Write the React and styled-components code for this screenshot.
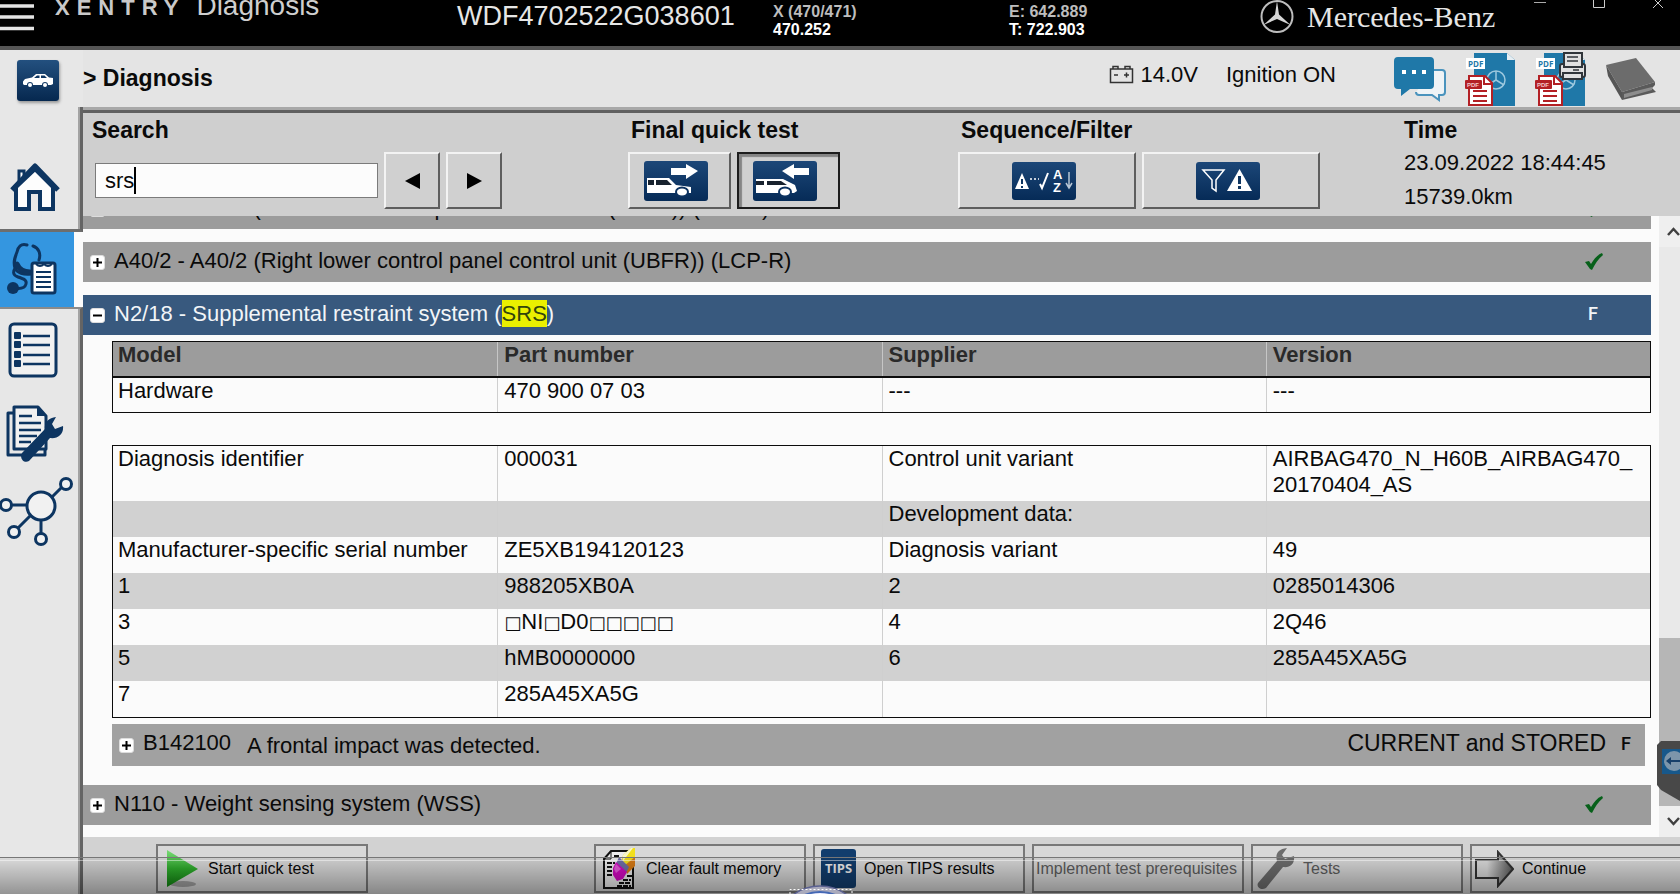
import React, { useState } from "react";
import styled, { createGlobalStyle, css } from "styled-components";

const GlobalStyle = createGlobalStyle`
  * {
    box-sizing: border-box;
  }
  body {
    margin: 0;
    font-family: "Liberation Sans", Arial, sans-serif;
    font-size: 22px;
    color: #0a0a0a;
    background: #e5e5e5;
  }
  button, input {
    font-family: inherit;
    color: inherit;
  }
  button {
    padding: 0;
    cursor: pointer;
  }
  svg {
    display: block;
    flex: none;
  }
`;

const Page = styled.div`
  position: relative;
  display: flex;
  flex-direction: column;
  height: 100vh;
  overflow: hidden;
`;

// Top bar
const TopBar = styled.header`
  display: grid;
  grid-template-columns: 457fr 316fr 236fr 251fr 420fr;
  height: 50px;
  background: #000;
  border-bottom: 4px solid #555;
  color: #e6e6e6;
  overflow: hidden;
  white-space: nowrap;
`;

const Brand = styled.div`
  display: flex;
  align-items: flex-start;
`;

const MenuButton = styled.button`
  width: 55px;
  border: 0;
  background: none;
`;

const BrandName = styled.span`
  font-size: 22px;
  font-weight: bold;
  line-height: 16px;
  letter-spacing: 7px;
  color: #c9c9c9;
  margin-right: 11px;
`;

const BrandProduct = styled.span`
  font-size: 28px;
  line-height: 12px;
  color: #cfcfcf;
`;

const Vin = styled.div`
  font-size: 27px;
  line-height: 32px;
`;

const VehicleInfo = styled.div`
  font-size: 16px;
  font-weight: bold;
  line-height: 18px;
  padding-top: 3px;
  color: #fff;

  div:first-child {
    color: #bdbdbd;
  }
`;

const Maker = styled.div`
  display: flex;
  align-items: flex-start;
  gap: 13px;
  font-family: "Liberation Serif", "Times New Roman", serif;
  font-size: 30px;
  line-height: 34px;
`;

const WindowButtons = styled.div`
  display: flex;
  gap: 47px;
  margin-left: auto;
  padding-right: 16px;
`;

const WindowButton = styled.button`
  width: 12px;
  height: 10px;
  border: 0;
  background: none;
`;

// Frame
const Body = styled.div`
  display: flex;
  flex: 1;
  min-height: 0;
`;

const Sidebar = styled.nav`
  display: flex;
  flex-direction: column;
  flex: none;
  width: 83px;
  background: #e7e7e7;
`;

const CarCell = styled.div`
  height: 57px;
  padding: 10px 0 0 17px;
`;

const CarButton = styled.button`
  display: flex;
  align-items: center;
  justify-content: center;
  width: 42px;
  height: 41px;
  border: 0;
  border-radius: 3px;
  background: linear-gradient(#23507f, #06284f);
  box-shadow: 1px 2px 3px #999;
`;

const edge = css`
  border-right: 3px solid #646464;
  box-shadow: inset -2px 0 0 #a3a3a3;
`;

const HomeCell = styled.div`
  height: 125px;
  padding: 55px 0 0 9px;
  ${edge}
  border-bottom: 3px solid #6e6e6e;
`;

const ActiveCell = styled.div`
  height: 75px;
  background: linear-gradient(to right, #3496e0 74px, #fbfbfb 74px);
  padding: 10px 0 0 6px;
`;

const SideRest = styled.div`
  flex: 1;
  display: flex;
  flex-direction: column;
  align-items: flex-start;
  border-top: 2px solid #8b8b8b;
  ${edge}
`;

const SideButton = styled.button`
  display: block;
  border: 0;
  background: none;
  margin: ${({ $margin }) => $margin || "0"};
`;

const Main = styled.main`
  display: flex;
  flex-direction: column;
  flex: 1;
  min-width: 0;
`;

// Status strip
const Strip = styled.div`
  display: flex;
  align-items: center;
  height: 57px;
  background: #e4e4e4;
`;

const Crumb = styled.h1`
  flex: 1;
  margin: 0;
  font-size: 23px;
  line-height: 26px;
  padding-bottom: 2px;
`;

const Status = styled.div`
  display: flex;
  align-items: center;
  gap: 6px;
  line-height: 26px;
  padding-bottom: 8px;
  margin-right: 28px;
`;

const Tools = styled.div`
  display: flex;
  align-items: center;
  gap: 19px;
  margin-left: 30px;
  margin-right: 23px;
`;

const ToolButton = styled.button`
  border: 0;
  background: none;
`;

// Search and filter panel
const Panel = styled.section`
  display: grid;
  grid-template-columns: 545fr 330fr 446fr 276fr;
  height: 109px;
  border-top: 3px solid #a8a8a8;
  box-shadow: inset 0 3px 0 #606060;
  background: #cfcfcf;
`;

const PanelGroup = styled.div`
  padding-top: 6px;
`;

const PanelTitle = styled.h2`
  margin: 0;
  padding-left: ${({ $indent }) => $indent}px;
  font-size: 23px;
  line-height: 28px;
`;

const PanelLines = styled.div`
  margin-top: 2px;
  line-height: 34px;
`;

const ButtonRow = styled.div`
  display: flex;
  gap: 6px;
  margin-top: 8px;
`;

const SearchRow = styled(ButtonRow)`
  padding-left: 12px;
  align-items: center;
`;

const SearchField = styled.label`
  display: flex;
  align-items: center;
  width: 283px;
  height: 35px;
  padding-left: 9px;
  border: 1px solid #7b7b7b;
  background: #fcfcfc;
`;

const SearchInput = styled.input`
  field-sizing: content;
  max-width: 260px;
  padding: 0;
  border: 0;
  outline: 0;
  background: none;
  font-size: 22px;
  caret-color: transparent;
`;

const Caret = styled.span`
  width: 2px;
  height: 27px;
  background: #000;
`;

const BevelButton = styled.button`
  display: flex;
  align-items: center;
  justify-content: center;
  width: ${({ $width }) => $width}px;
  height: 57px;
  border: 2px solid;
  border-color: #f3f3f3 #5e5e5e #5e5e5e #f3f3f3;
  background: #d0d0d0;

  ${({ $pressed }) =>
    $pressed &&
    css`
      border-color: #1d1d1d;
      box-shadow: inset 3px 3px 1px #858585;
    `}
`;

const TileButton = styled(BevelButton)`
  padding-right: 7px;
`;

// Result list
const ListArea = styled.div`
  display: flex;
  flex: 1;
  min-height: 0;
  background: #fbfbfb;
`;

const List = styled.div`
  flex: 1;
  min-width: 0;
  overflow: hidden;
  padding-right: 8px;
`;

const Scrolled = styled.div`
  margin-top: -27px;
`;

const UnitRow = styled.div`
  display: flex;
  align-items: center;
  height: 40px;
  margin-bottom: 13px;
  padding: 0 48px 3px 7px;
  color: ${({ $open }) => ($open ? "#f2f5f8" : "#0a0a0a")};
  background: ${({ $open }) => ($open ? "#38597e" : "#9c9c9c")};
`;

const UnitName = styled.span`
  flex: 1;
  margin-left: 9px;
  white-space: nowrap;
`;

const Mark = styled.mark`
  padding: 1px 0;
  background: #eaf000;
  color: #33450c;
`;

const Flag = styled.span`
  font-family: Roboto, "Noto Sans", sans-serif;
  font-size: 18px;
  font-weight: 500;
  width: 12px;
  margin-right: 3px;
`;

const ToggleButton = styled.button`
  display: flex;
  align-items: center;
  justify-content: center;
  width: 15px;
  height: 15px;
  margin-top: 4px;
  border: 1px solid #ddd;
  border-radius: 3px;
  background: #fff;
`;

const Details = styled.div`
  margin: -7px 0 19px 29px;
`;

const DataTable = styled.table`
  width: 100%;
  table-layout: fixed;
  border: 1px solid #0c0c0c;
  border-spacing: 0;
  margin-bottom: ${({ $gap }) => $gap}px;
  line-height: 26px;
`;

const HeadCell = styled.th`
  height: 36px;
  padding: 0 5px;
  text-align: left;
  vertical-align: top;
  color: #2a2a2a;
  background: #9c9c9c;
  border-bottom: 2px solid #0c0c0c;

  & + & {
    padding-left: 7px;
    box-shadow: inset 1px 0 0 #c6c6c6;
  }
`;

const Cell = styled.td`
  height: ${({ $height }) => $height}px;
  padding: 0 5px;
  vertical-align: top;
  white-space: pre-line;
  background: ${({ $shaded }) => ($shaded ? "#d1d1d1" : "#fbfbfb")};

  & + & {
    padding-left: 7px;
    box-shadow: ${({ $shaded }) => ($shaded ? "none" : "inset 1px 0 0 #cfcfcf")};
  }
`;

const Tofu = styled.span`
  font-family: "DejaVu Sans", sans-serif;
  font-size: 18px;
`;

const FaultRow = styled.div`
  display: flex;
  align-items: center;
  height: 42px;
  margin-right: 6px;
  padding: 0 9px 4px 7px;
  background: #a1a1a1;
`;

const FaultCode = styled.span`
  margin-left: 9px;
`;

const FaultText = styled.span`
  flex: 1;
  padding-top: 5px;
  margin-left: 16px;
`;

const FaultState = styled.span`
  font-size: 23px;
  margin-right: 15px;
`;

const ScrollBar = styled.div`
  display: flex;
  flex-direction: column;
  width: 21px;
  background: #e9e9e9;
`;

const ScrollButton = styled.button`
  height: 31px;
  border: 0;
  background: #efefef;
  padding-left: 8px;
  overflow: hidden;
`;

const ScrollTrack = styled.div`
  display: flex;
  flex-direction: column;
  justify-content: flex-end;
  flex: 1;
`;

const ScrollThumb = styled.div`
  height: 30%;
  background: #b6b6b6;
`;

// Footer
const Footer = styled.footer`
  display: flex;
  justify-content: space-between;
  height: 57px;
  padding: 7px 0 0 73px;
  background: #d2d2d2;
  overflow: hidden;
`;

const FooterGroup = styled.div`
  display: flex;
  gap: 7px;
  margin-right: -2px;
`;

const ActionButton = styled.button`
  display: flex;
  align-items: center;
  gap: 8px;
  width: 212px;
  height: 49px;
  padding: 0 0 0 ${({ $pad }) => $pad}px;
  border: 2px solid #787878;
  background: #d8d8d8;
  font-size: 16px;
  white-space: nowrap;

  &:disabled {
    color: #5c5c5c;
  }
`;

const PlayerShade = styled.div`
  position: absolute;
  left: 0;
  right: 0;
  bottom: 0;
  height: 37px;
  border-top: 1px solid #777;
  background: linear-gradient(rgba(0, 0, 0, 0.06), rgba(0, 0, 0, 0.36));
  pointer-events: none;

  &::before {
    content: "";
    display: block;
    margin-top: 2px;
    height: 1px;
    background: rgba(255, 255, 255, 0.45);
  }
`;

const PlayerKnob = styled.div`
  position: absolute;
  left: 50%;
  bottom: 0;
  margin-left: -60px;
  pointer-events: none;
`;

const RemoteTab = styled.div`
  position: absolute;
  right: 0;
  bottom: 93px;
`;

const NAVY = "#0d3561";

const MenuIcon = () => (
  <svg width="34" height="32" viewBox="0 0 34 32">
    <path d="M0 6h34M0 17h34M0 28.500h34" stroke="#e4e4e4" strokeWidth="3.500" />
  </svg>
);

const StarIcon = () => (
  <svg width="34" height="34" viewBox="0 0 34 34">
    <circle cx="17" cy="16.500" r="15.500" fill="none" stroke="#bdbdbd" strokeWidth="2" />
    <path d="M17 1l2 13.500 11.500 10.500-13.500-6-13.500 6L15 14.500z" fill="#d6d6d6" />
  </svg>
);

const CarIcon = () => (
  <svg width="32" height="15" viewBox="0 0 32 15">
    <path d="M1 8.500l2-2.500 7-1.500L14 1h9l4 3.500 4 .5v6l-2 1h-3a3 3 0 0 0-6 0h-9a3 3 0 0 0-6 0H2l-1-1z" fill="#fff" />
    <path d="M12 5l3-2.500h2.500V5zM19 2.500h3.500L25 5h-6z" fill={NAVY} />
    <circle cx="8" cy="12" r="2" fill="#fff" />
    <circle cx="23" cy="12" r="2" fill="#fff" />
  </svg>
);

// One outline for roof, chimney and walls, the eaves stroked on top
const HomeIcon = () => (
  <svg width="52" height="50" viewBox="0 0 52 50">
    <path d="M7 25v22h13V30h11v17h13V25L26 7z" fill="#fdfdfd" stroke={NAVY} strokeWidth="4" />
    <path d="M10 20V9h5v7" fill="#fdfdfd" stroke={NAVY} strokeWidth="3" />
    <path d="M3 28L26 4l23 24" fill="none" stroke={NAVY} strokeWidth="5" strokeLinejoin="round" />
  </svg>
);

const StethoscopeIcon = () => (
  <svg width="54" height="54" viewBox="0 0 54 54">
    <g fill="none" stroke={NAVY} strokeWidth="3" strokeLinecap="round">
      <path d="M21 3c-6-2-9 2-10 7-2 5-4 10-2 16 2 5 9 7 16 6M27 4c6 2 8 8 6 14" />
      <path d="M10 25c-3 4-4 8 2 10s9 3 8 7-6 5-12 4" />
      <path d="M11 22c2 5 7 8 13 8" strokeWidth="5" />
    </g>
    <circle cx="7" cy="46" r="6" fill={NAVY} />
    <rect x="26" y="21" width="23" height="30" rx="2" fill="#fff" stroke={NAVY} strokeWidth="3" />
    <path d="M30 22q4 4 8 0q4 4 8 0" fill="none" stroke={NAVY} strokeWidth="2" />
    <path d="M30 30h15M30 35h15M30 40h15M30 45h15" stroke={NAVY} strokeWidth="2" />
  </svg>
);

const ListIcon = () => (
  <svg width="50" height="56" viewBox="0 0 50 56">
    <rect x="2" y="2" width="46" height="52" rx="4" fill="#f1f1f1" stroke={NAVY} strokeWidth="3" />
    {[14, 23, 33, 42].map((y) => (
      <g key={y}>
        <rect x="6" y={y - 4} width="7" height="7" rx="1" fill={NAVY} />
        <path d={`M15 ${y}h27`} stroke={NAVY} strokeWidth="2.500" />
      </g>
    ))}
  </svg>
);

const RepairIcon = () => (
  <svg width="60" height="58" viewBox="0 0 60 58">
    <path d="M8 8H2v42h37v-6" fill="none" stroke={NAVY} strokeWidth="3" strokeLinejoin="round" />
    <path d="M8 2h24l8 9v33H8z" fill="#f1f1f1" stroke={NAVY} strokeWidth="3" strokeLinejoin="round" />
    <path d="M31 2v9h9z" fill={NAVY} />
    <path d="M13 11h13M13 18h22M13 25h22M13 31h18M13 37h12" stroke={NAVY} strokeWidth="2.500" />
    <path d="M16 48l23-24c-1-6 3-11 11-12l-4 7 3 5 8-3c1 8-5 13-13 12L23 56c-5 3-10-3-7-8z" fill={NAVY} />
  </svg>
);

const NetworkIcon = () => (
  <svg width="74" height="70" viewBox="0 0 74 70">
    <path d="M10 28h16M52 20l9-9M30 39L18 51M41 43v15" stroke={NAVY} strokeWidth="3" />
    <g fill="#f1f1f1" stroke={NAVY} strokeWidth="3">
      <circle cx="41" cy="29" r="14" />
      <circle cx="66" cy="7" r="5.500" />
      <circle cx="6" cy="28" r="5.500" />
      <circle cx="14" cy="55" r="5.500" />
      <circle cx="41" cy="62" r="5.500" />
    </g>
  </svg>
);

const BatteryIcon = () => (
  <svg width="25" height="20" viewBox="0 0 25 20">
    <path d="M1.500 4h22v13.500h-22zM4 4V1.500h5V4M16 4V1.500h5V4M5 10h4M15 10h5M17.500 7.500v5" fill="none" stroke="#333" strokeWidth="1.500" />
  </svg>
);

const ChatIcon = () => (
  <svg width="52" height="46" viewBox="0 0 52 46">
    <path d="M40 14h8q3 0 3 3v19q0 3-3 3h-3v5l-7-5H25q-3 0-3-3" fill="#eef3f6" stroke="#4a93bd" strokeWidth="2" />
    <path d="M4 1h32q4 0 4 4v24q0 4-4 4H16l-9 7v-7H4q-4 0-4-4V5q0-4 4-4z" fill="#1f78a8" />
    <path d="M8 14h4v4H8zM18 14h4v4h-4zM28 14h4v4h-4z" fill="#fff" />
  </svg>
);

const PdfIcon = ({ printer }) => (
  <svg width="51" height="54" viewBox="0 0 51 54">
    <path d="M9 1h33l8 7v46H9z" fill="#1f78a8" />
    <path d="M42 1l8 7h-8z" fill="#e6eef3" />
    <g fill="none" stroke="#9cc8de" strokeWidth="1.500">
      <circle cx="31" cy="28" r="9" />
      <path d="M31 19v9l8 5M31 28l-8 5" />
    </g>
    <rect x="1" y="6" width="19" height="11" fill="#fff" />
    <text x="3" y="15" fontFamily="Open Sans, sans-serif" fontWeight="bold" fontSize="8" fill="#1f78a8">PDF</text>
    <path d="M4 24h16l7 7v22H4z" fill="#fff" stroke="#b32025" strokeWidth="2" />
    <path d="M19 24v8h8M8 39h14M8 44h14M8 49h14" fill="none" stroke="#b32025" strokeWidth="2" />
    <rect x="0" y="28" width="17" height="9" rx="1" fill="#b32025" />
    <text x="2" y="35" fontFamily="Liberation Sans, sans-serif" fontWeight="bold" fontSize="6" fill="#f3c9ca">PDF</text>
    {printer && (
      <g fill="#e0e0e0" stroke="#30353a" strokeWidth="2">
        <rect x="25" y="12" width="25" height="13" rx="2" />
        <path d="M29 1h18v14H29zM28 21h19v6H28z" />
        <path d="M32 5h11M32 9h11M38 18h6" strokeWidth="1.500" />
      </g>
    )}
  </svg>
);

const BookIcon = () => (
  <svg width="52" height="44" viewBox="0 0 52 44">
    <path d="M1 8L31 1l19 24-33 10z" fill="#6c6c6c" />
    <path d="M1 8l16 27v8L3 19z" fill="#555" />
    <path d="M17 35l33-10v3l-3 3 4 4-34 8z" fill="#5a5a5a" />
    <path d="M19 37l28-7v3l-28 8z" fill="#8d8d8d" />
  </svg>
);

const IconTile = ({ children, height = 38 }) => (
  <svg width="64" height={height} viewBox={`0 0 64 ${height}`}>
    <defs>
      <linearGradient id="tile" x1="0" y1="0" x2="0" y2="1">
        <stop offset="0" stopColor="#1c4778" />
        <stop offset="1" stopColor="#062b57" />
      </linearGradient>
    </defs>
    <rect width="64" height={height} rx="3" fill="url(#tile)" />
    {children}
  </svg>
);

const QuickTestIcon = ({ back }) => (
  <IconTile height={40}>
    <path d={back ? "M29 10l12-7v4h15v7H41v4z" : "M54 10L42 3v4H27v7h15v4z"} fill="#fff" />
    {back ? (
      <path d="M3 18h27l12 6 2 6-3 2H3z" fill="#fff" />
    ) : (
      <path d="M3 17h22l7 7 15 2v6H3z" fill="#fff" />
    )}
    <path d={back ? "M3 20h8v4H3zM14 20h14l6 4H14z" : "M4 19h6v5H4zM12 19h11l5 5H12z"} fill="#18222e" />
    <ellipse cx={back ? 32 : 38} cy="31" rx="6" ry="4.500" fill="#fff" stroke="#0c3260" strokeWidth="2" />
  </IconTile>
);

const SequenceIcon = () => (
  <IconTile>
    <path d="M3 27L10 11l7 16z" fill="#fff" />
    <path d="M10 17v5M10 24v2" stroke={NAVY} strokeWidth="2" />
    <path d="M18 17h2M22 17h2M26 17h1" stroke="#fff" strokeWidth="1.500" />
    <path d="M28 22l2 4 6-15" fill="none" stroke="#fff" strokeWidth="2" />
    <g fontFamily="Liberation Sans, sans-serif" fontWeight="bold" fontSize="13" fill="#fff">
      <text x="41" y="17">A</text>
      <text x="41" y="30">Z</text>
    </g>
    <path d="M57 10v16M54 21l3 5 3-5" fill="none" stroke="#b7c5d4" strokeWidth="1.500" />
  </IconTile>
);

const FilterIcon = () => (
  <IconTile>
    <path d="M7 8h21l-8 10v11l-4-3v-8z" fill="none" stroke="#fff" strokeWidth="1.500" />
    <path d="M31 29L43.500 7 56 29z" fill="#fff" />
    <path d="M43.500 14v8M43.500 24v3" stroke={NAVY} strokeWidth="3" />
  </IconTile>
);

const Triangle = ({ left }) => (
  <svg width="15" height="16" viewBox="0 0 15 16">
    <path d={left ? "M15 0v16L0 8z" : "M0 0v16l15-8z"} fill="#000" />
  </svg>
);

const CheckIcon = () => (
  <svg width="18" height="18" viewBox="0 0 18 18">
    <path d="M0 10l4-1 2 3c3-5 6-9 11-11l1 2c-5 4-8 9-11 15L5 17z" fill="#07601a" />
  </svg>
);

const ToggleIcon = ({ open }) => (
  <svg width="9" height="9" viewBox="0 0 9 9">
    <path d={open ? "M0 4.500h9" : "M0 4.500h9M4.500 0v9"} stroke="#000" strokeWidth="2" />
  </svg>
);

const Chevron = ({ up }) => (
  <svg width="13" height="9" viewBox="0 0 13 9">
    <path d={up ? "M1 8l5.500-6L12 8" : "M1 1l5.500 6L12 1"} fill="none" stroke="#404040" strokeWidth="2.500" />
  </svg>
);

const PlayIcon = () => (
  <svg width="33" height="40" viewBox="0 0 33 40">
    <defs>
      <linearGradient id="play" x1="0" y1="0" x2="0" y2="1">
        <stop offset="0" stopColor="#7ad977" />
        <stop offset="0.500" stopColor="#2fae2d" />
        <stop offset="1" stopColor="#128312" />
      </linearGradient>
    </defs>
    <ellipse cx="16" cy="35" rx="13" ry="3" fill="#9f9f9f" />
    <path d="M0 1l31 19L0 38z" fill="url(#play)" />
  </svg>
);

const EraserIcon = () => (
  <svg width="35" height="42" viewBox="0 0 35 42">
    <path d="M8 3h22v37H1V11z" fill="#ececec" stroke="#111" strokeWidth="2" />
    <path d="M1 11h7V3" fill="none" stroke="#111" />
    <path d="M11 8h6M4 15h8M4 19h6M4 23h8M4 27h6M20 32h8M16 35h12M14 38h14M24 28h5" stroke="#111" strokeWidth="2" strokeDasharray="5 1" />
    <path d="M20 7L28 0h4v11l-6 9-7-8z" fill="#f2df1c" />
    <path d="M20 7L28 0h2L20 13z" fill="#f7f6c8" />
    <path d="M32 9v9l-8 8-3-8z" fill="#d67a16" />
    <path d="M16 9l10 10-3 6-10-9z" fill="#6f6fa8" />
    <path d="M13 14l11 10-4 7-6 2-4-6v-7z" fill="#d20ac0" />
    <path d="M13 16l5 5-5 4-2-4z" fill="#e85bdd" />
  </svg>
);

const TipsIcon = () => (
  <svg width="35" height="39" viewBox="0 0 35 39">
    <rect width="35" height="39" rx="3" fill="#123d6d" />
    <text x="17.500" y="24" textAnchor="middle" fontFamily="Open Sans, sans-serif" fontWeight="bold" fontSize="13" fill="#eee">
      TIPS
    </text>
  </svg>
);

const WrenchIcon = () => (
  <svg width="38" height="42" viewBox="0 0 38 42">
    <path d="M1 35l19-22c-2-7 1-12 10-13l-5 7 3 4 9-3c1 8-4 12-11 11L9 40c-5 3-10-1-8-5z" fill="#6d6d6d" />
  </svg>
);

const ArrowIcon = () => (
  <svg width="39" height="38" viewBox="0 0 39 38">
    <defs>
      <linearGradient id="arrow">
        <stop offset="0.300" stopColor="#dadada" />
        <stop offset="1" stopColor="#555" />
      </linearGradient>
    </defs>
    <path d="M1 10h22V2l15 17-15 17v-8H1z" fill="url(#arrow)" stroke="#333" strokeWidth="2" />
  </svg>
);

const hardware = [["Hardware", "470 900 07 03", "---", "---"]];

const unitData = [
  ["Diagnosis identifier", "000031", "Control unit variant", "AIRBAG470_N_H60B_AIRBAG470_\n20170404_AS"],
  ["", "", "Development data:", ""],
  ["Manufacturer-specific serial number", "ZE5XB194120123", "Diagnosis variant", "49"],
  ["1", "988205XB0A", "2", "0285014306"],
  ["3", "□NI□D0□□□□□", "4", "2Q46"],
  ["5", "hMB0000000", "6", "285A45XA5G"],
  ["7", "285A45XA5G", "", ""],
];

// Unprintable characters come through as boxes
const renderValue = (value) =>
  value.split(/(□+)/).map((part, index) => (part.startsWith("□") ? <Tofu key={index}>{part}</Tofu> : part));

const Unit = ({ open, children, status }) => (
  <UnitRow $open={open}>
    <ToggleButton aria-label={open ? "Collapse" : "Expand"}>
      <ToggleIcon open={open} />
    </ToggleButton>
    <UnitName>{children}</UnitName>
    {status || <CheckIcon />}
  </UnitRow>
);

const App = () => {
  const [search, setSearch] = useState("srs");

  return (
    <Page>
      <GlobalStyle />
      <TopBar>
        <Brand>
          <MenuButton aria-label="Menu">
            <MenuIcon />
          </MenuButton>
          <BrandName>XENTRY</BrandName>
          <BrandProduct>Diagnosis</BrandProduct>
        </Brand>
        <Vin>WDF4702522G038601</Vin>
        <VehicleInfo>
          <div>X (470/471)</div>
          <div>470.252</div>
        </VehicleInfo>
        <VehicleInfo>
          <div>E: 642.889</div>
          <div>T: 722.903</div>
        </VehicleInfo>
        <Maker>
          <StarIcon />
          Mercedes-Benz
          <WindowButtons>
            <WindowButton aria-label="Minimize">
              <svg width="12" height="10" viewBox="0 0 12 10">
                <path d="M0 2.500h12" stroke="#aaa" />
              </svg>
            </WindowButton>
            <WindowButton aria-label="Maximize">
              <svg width="12" height="10" viewBox="0 0 12 10">
                <path d="M.5 0v7.500h11V0" fill="none" stroke="#ccc" />
              </svg>
            </WindowButton>
            <WindowButton aria-label="Close">
              <svg width="12" height="10" viewBox="0 0 12 10">
                <path d="M1 8L9 0M11 8L3 0" stroke="#ccc" />
              </svg>
            </WindowButton>
          </WindowButtons>
        </Maker>
      </TopBar>

      <Body>
        <Sidebar>
          <CarCell>
            <CarButton aria-label="Vehicle">
              <CarIcon />
            </CarButton>
          </CarCell>
          <HomeCell>
            <SideButton aria-label="Home">
              <HomeIcon />
            </SideButton>
          </HomeCell>
          <ActiveCell>
            <SideButton aria-label="Diagnosis">
              <StethoscopeIcon />
            </SideButton>
          </ActiveCell>
          <SideRest>
            <SideButton aria-label="Lists" $margin="13px 0 0 8px">
              <ListIcon />
            </SideButton>
            <SideButton aria-label="Repair" $margin="27px 0 0 6px">
              <RepairIcon />
            </SideButton>
            <SideButton aria-label="Network" $margin="14px 0 0 0">
              <NetworkIcon />
            </SideButton>
          </SideRest>
        </Sidebar>

        <Main>
          <Strip>
            <Crumb>&gt; Diagnosis</Crumb>
            <Status>
              <BatteryIcon />
              14.0V
            </Status>
            <Status>Ignition ON</Status>
            <Tools>
              <ToolButton aria-label="Chat">
                <ChatIcon />
              </ToolButton>
              <ToolButton aria-label="Save PDF">
                <PdfIcon />
              </ToolButton>
              <ToolButton aria-label="Print PDF">
                <PdfIcon printer />
              </ToolButton>
              <ToolButton aria-label="Manual">
                <BookIcon />
              </ToolButton>
            </Tools>
          </Strip>

          <Panel>
            <PanelGroup>
              <PanelTitle $indent={9}>Search</PanelTitle>
              <SearchRow>
                <SearchField>
                  <SearchInput
                    aria-label="Search"
                    value={search}
                    onChange={(e) => setSearch(e.target.value)}
                  />
                  <Caret />
                </SearchField>
                <BevelButton $width={56} aria-label="Previous">
                  <Triangle left />
                </BevelButton>
                <BevelButton $width={56} aria-label="Next">
                  <Triangle />
                </BevelButton>
              </SearchRow>
            </PanelGroup>
            <PanelGroup>
              <PanelTitle $indent={3}>Final quick test</PanelTitle>
              <ButtonRow>
                <TileButton $width={103} aria-label="Initial quick test">
                  <QuickTestIcon />
                </TileButton>
                <TileButton $width={103} $pressed aria-label="Final quick test">
                  <QuickTestIcon back />
                </TileButton>
              </ButtonRow>
            </PanelGroup>
            <PanelGroup>
              <PanelTitle $indent={3}>Sequence/Filter</PanelTitle>
              <ButtonRow>
                <TileButton $width={178} aria-label="Sequence">
                  <SequenceIcon />
                </TileButton>
                <TileButton $width={178} aria-label="Filter">
                  <FilterIcon />
                </TileButton>
              </ButtonRow>
            </PanelGroup>
            <PanelGroup>
              <PanelTitle $indent={0}>Time</PanelTitle>
              <PanelLines>
                <div>23.09.2022 18:44:45</div>
                <div>15739.0km</div>
              </PanelLines>
            </PanelGroup>
          </Panel>

          <ListArea>
            <List>
              <Scrolled>
                <Unit>A40/1 - A40/1 (Left lower control panel control unit (UBFL)) (LCP-L)</Unit>
                <Unit>A40/2 - A40/2 (Right lower control panel control unit (UBFR)) (LCP-R)</Unit>
                <Unit open status={<Flag>F</Flag>}>
                  N2/18 - Supplemental restraint system (<Mark>SRS</Mark>)
                </Unit>
                <Details>
                  <DataTable $gap={32}>
                    <thead>
                      <tr>
                        <HeadCell>Model</HeadCell>
                        <HeadCell>Part number</HeadCell>
                        <HeadCell>Supplier</HeadCell>
                        <HeadCell>Version</HeadCell>
                      </tr>
                    </thead>
                    <tbody>
                      {hardware.map((row) => (
                        <tr key={row[0]}>
                          {row.map((value, index) => (
                            <Cell key={index} $height={34}>
                              {value}
                            </Cell>
                          ))}
                        </tr>
                      ))}
                    </tbody>
                  </DataTable>
                  <DataTable $gap={6}>
                    <tbody>
                      {unitData.map((row, rowIndex) => (
                        <tr key={rowIndex}>
                          {row.map((value, index) => (
                            <Cell key={index} $height={rowIndex === 0 ? 55 : 36} $shaded={rowIndex % 2 === 1}>
                              {renderValue(value)}
                            </Cell>
                          ))}
                        </tr>
                      ))}
                    </tbody>
                  </DataTable>
                  <FaultRow>
                    <ToggleButton aria-label="Expand">
                      <ToggleIcon />
                    </ToggleButton>
                    <FaultCode>B142100</FaultCode>
                    <FaultText>A frontal impact was detected.</FaultText>
                    <FaultState>CURRENT and STORED</FaultState>
                    <Flag>F</Flag>
                  </FaultRow>
                </Details>
                <Unit>N110 - Weight sensing system (WSS)</Unit>
              </Scrolled>
            </List>
            <ScrollBar>
              <ScrollButton aria-label="Scroll up">
                <Chevron up />
              </ScrollButton>
              <ScrollTrack>
                <ScrollThumb />
              </ScrollTrack>
              <ScrollButton aria-label="Scroll down">
                <Chevron />
              </ScrollButton>
            </ScrollBar>
          </ListArea>

          <Footer>
            <ActionButton $pad={9}>
              <PlayIcon />
              Start quick test
            </ActionButton>
            <FooterGroup>
              <ActionButton $pad={7}>
                <EraserIcon />
                Clear fault memory
              </ActionButton>
              <ActionButton $pad={6}>
                <TipsIcon />
                Open TIPS results
              </ActionButton>
              <ActionButton $pad={2} disabled>
                Implement test prerequisites
              </ActionButton>
              <ActionButton $pad={4} disabled>
                <WrenchIcon />
                Tests
              </ActionButton>
              <ActionButton $pad={3}>
                <ArrowIcon />
                Continue
              </ActionButton>
            </FooterGroup>
          </Footer>
        </Main>
      </Body>

      <RemoteTab>
        <svg width="23" height="60" viewBox="0 0 23 60">
          <path d="M4 0h19v60L4 49 0 44V4z" fill="#484848" />
          <rect x="5" y="8" width="18" height="25" fill="#17588b" />
          <circle cx="17" cy="20" r="10" fill="#7c95aa" />
          <path d="M9 20l5-4v3h9v2h-9v3z" fill="#17406a" />
        </svg>
      </RemoteTab>
      <PlayerShade />
      <PlayerKnob>
        <svg width="84" height="9" viewBox="0 0 84 9">
          <circle cx="40" cy="46" r="45" fill="#aab" stroke="#5b6191" strokeWidth="1.500" />
          <circle cx="40" cy="46" r="39" fill="#eef" stroke="#4468b4" strokeWidth="2" />
          <path d="M10 9V4.500h62V9" fill="none" stroke="#fff" strokeDasharray="2 2" />
        </svg>
      </PlayerKnob>
    </Page>
  );
};

export default App;
